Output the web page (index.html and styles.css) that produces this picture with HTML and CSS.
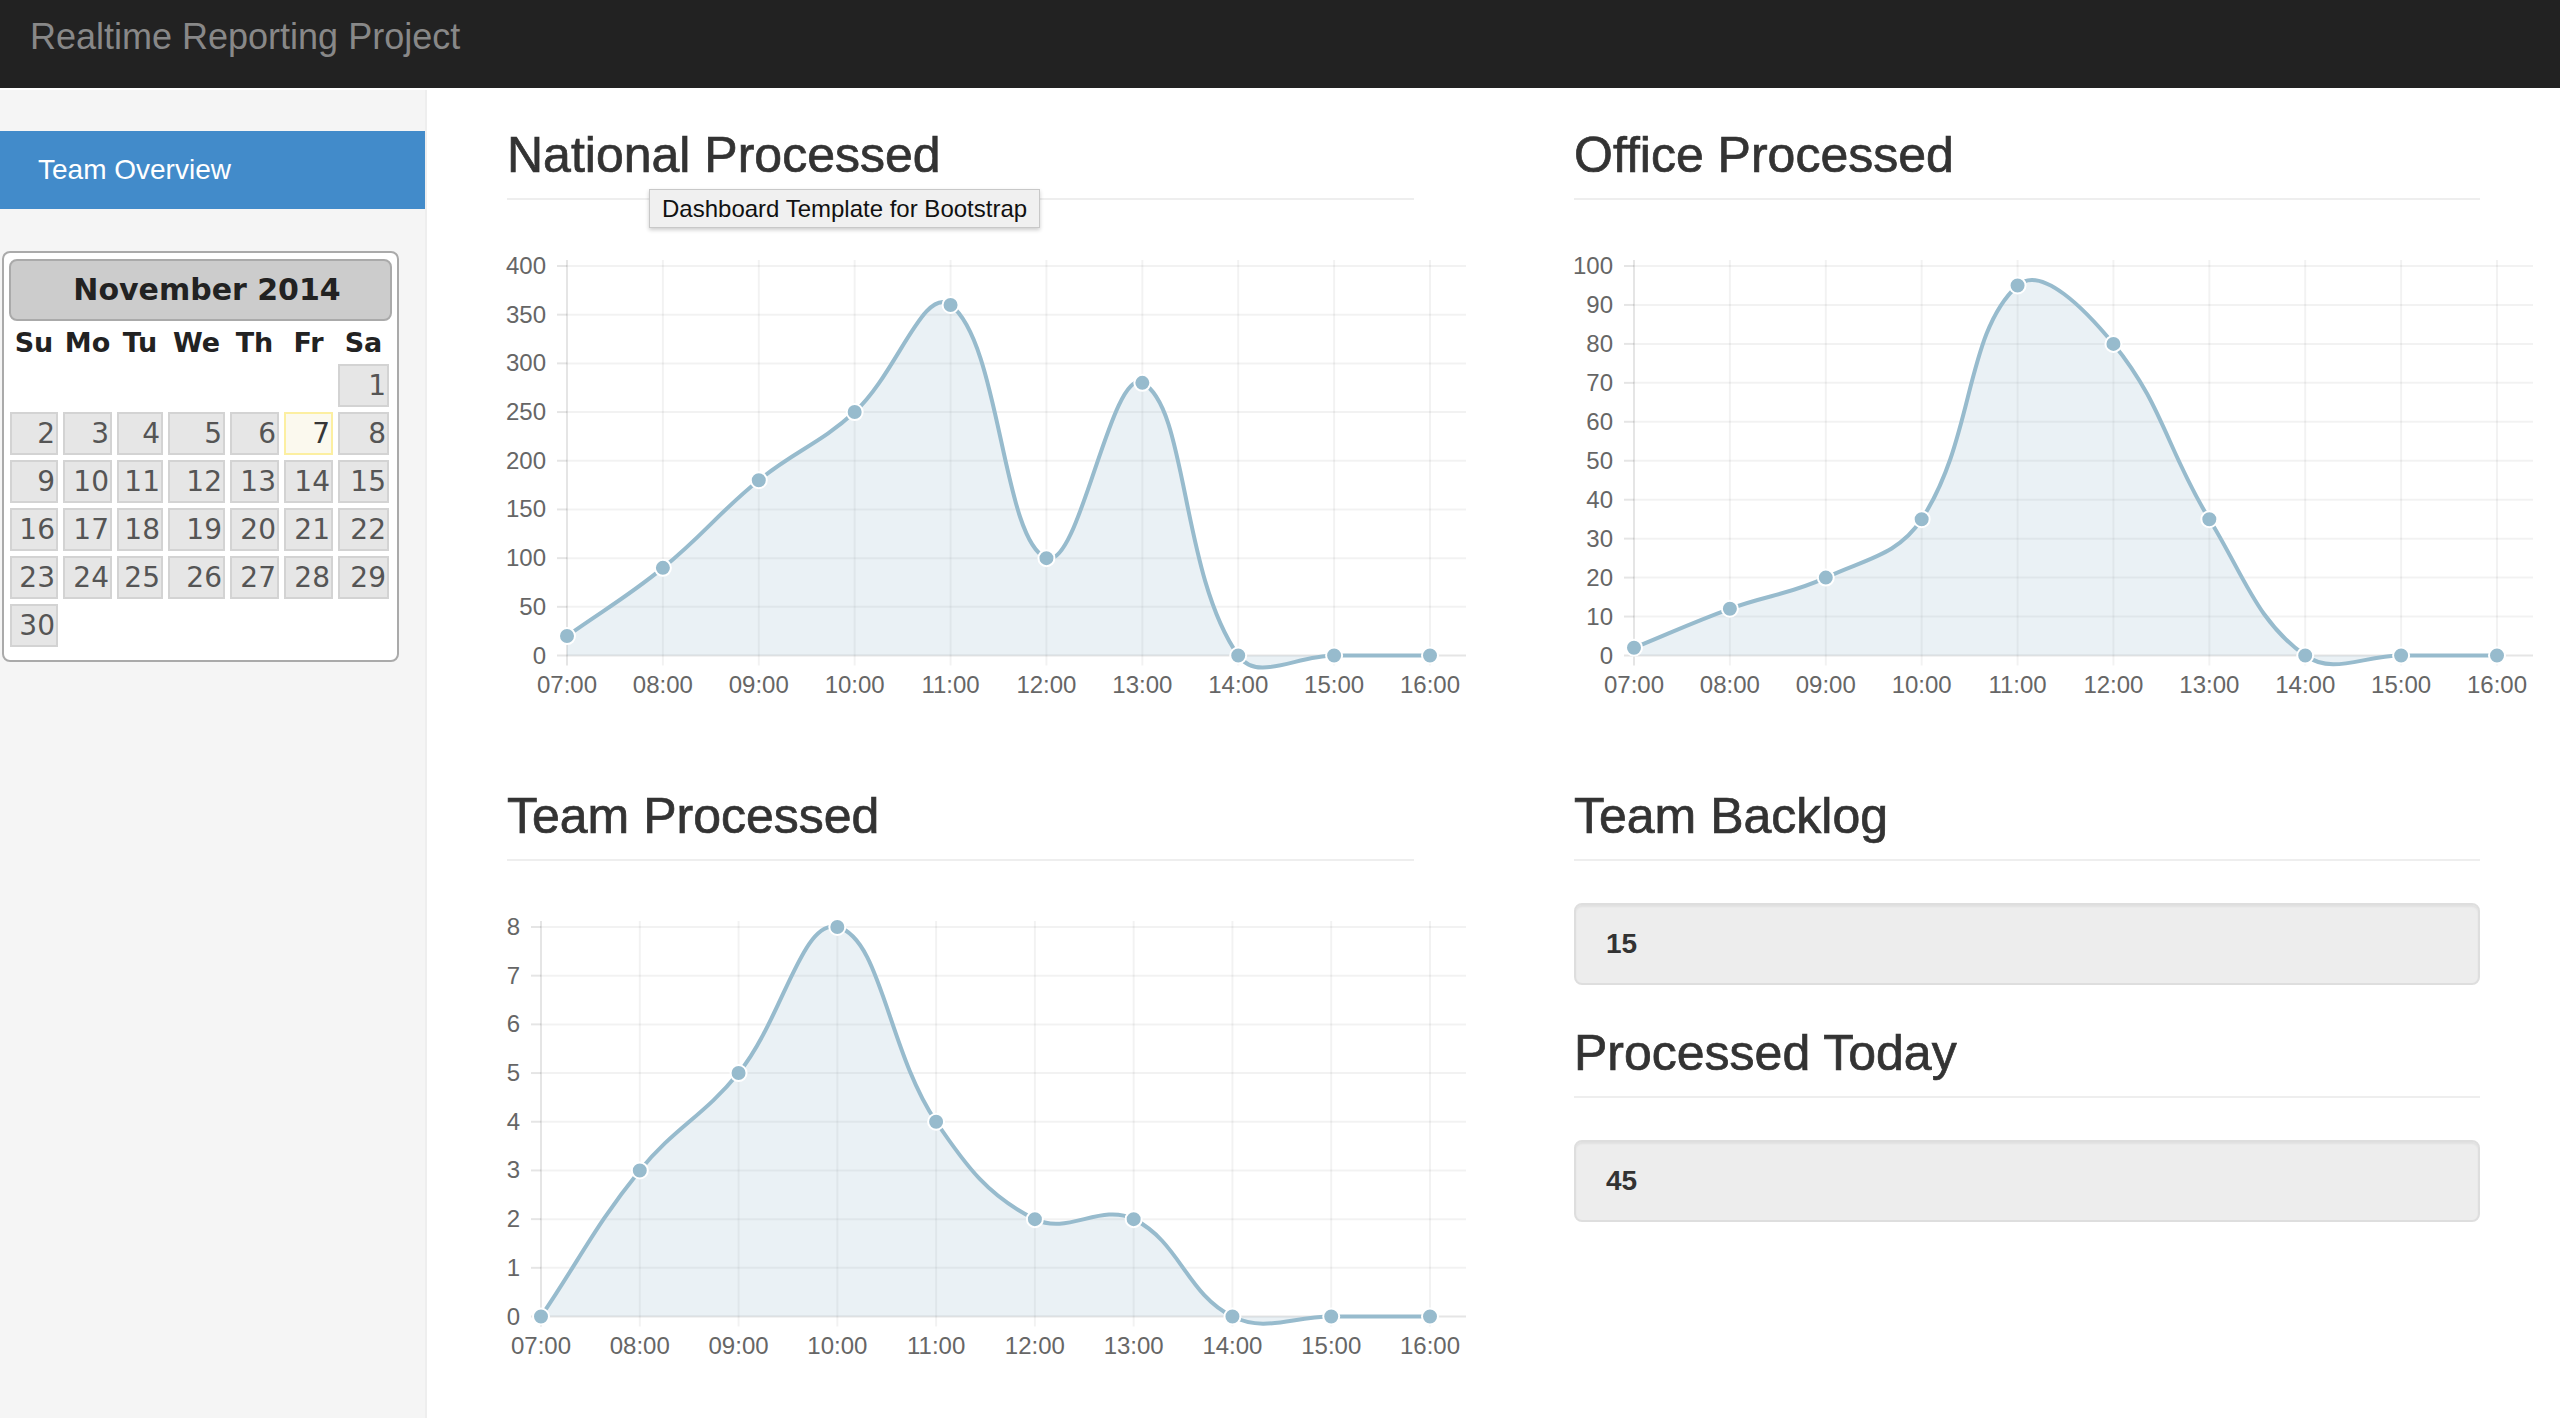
FILE: index.html
```html
<!DOCTYPE html>
<html lang="en">
<head>
<meta charset="utf-8">
<title>Dashboard Template for Bootstrap</title>
<link rel="stylesheet" href="styles.css">
</head>
<body>
<header class="navbar">
  <span class="brand">Realtime Reporting Project</span>
</header>
<div class="layout">
  <aside class="sidebar">
    <ul class="nav">
      <li class="nav-item active">Team Overview</li>
    </ul>
    <div class="datepicker">
      <div class="dp-header">November 2014</div>
      <div class="dp-grid">
        <span class="dp-dow">Su</span><span class="dp-dow">Mo</span><span class="dp-dow">Tu</span><span class="dp-dow">We</span><span class="dp-dow">Th</span><span class="dp-dow">Fr</span><span class="dp-dow">Sa</span>
        <span></span><span></span><span></span><span></span><span></span><span></span><span class="dp-day">1</span>
        <span class="dp-day">2</span><span class="dp-day">3</span><span class="dp-day">4</span><span class="dp-day">5</span><span class="dp-day">6</span><span class="dp-day today">7</span><span class="dp-day">8</span>
        <span class="dp-day">9</span><span class="dp-day">10</span><span class="dp-day">11</span><span class="dp-day">12</span><span class="dp-day">13</span><span class="dp-day">14</span><span class="dp-day">15</span>
        <span class="dp-day">16</span><span class="dp-day">17</span><span class="dp-day">18</span><span class="dp-day">19</span><span class="dp-day">20</span><span class="dp-day">21</span><span class="dp-day">22</span>
        <span class="dp-day">23</span><span class="dp-day">24</span><span class="dp-day">25</span><span class="dp-day">26</span><span class="dp-day">27</span><span class="dp-day">28</span><span class="dp-day">29</span>
        <span class="dp-day">30</span>
      </div>
    </div>
  </aside>
  <main class="main">
    <section class="panel">
      <h1 class="page-header">National Processed</h1>
      <svg class="chart" width="960" height="480" data-values="20,90,180,250,360,100,280,0,0,0" data-max="400" data-steps="8" data-axis="60" data-labelx="39"></svg>
    </section>
    <section class="panel">
      <h1 class="page-header">Office Processed</h1>
      <svg class="chart" width="960" height="480" data-values="2,12,20,35,95,80,35,0,0,0" data-max="100" data-steps="10" data-axis="60" data-labelx="39"></svg>
    </section>
    <section class="panel">
      <h1 class="page-header">Team Processed</h1>
      <svg class="chart" width="960" height="480" data-values="0,3,5,8,4,2,2,0,0,0" data-max="8" data-steps="8" data-axis="34" data-labelx="13"></svg>
    </section>
    <section class="panel">
      <h1 class="page-header">Team Backlog</h1>
      <div class="well">15</div>
      <h1 class="page-header">Processed Today</h1>
      <div class="well">45</div>
    </section>
  </main>
</div>
<div class="tip">Dashboard Template for Bootstrap</div>
<script src="charts.js"></script>
</body>
</html>
```

FILE: styles.css
```css
* { box-sizing: border-box; }

html, body {
  margin: 0;
  padding: 0;
}

body {
  font-family: "Liberation Sans", Arial, Helvetica, sans-serif;
  color: #333;
  background: #fff;
  position: relative;
  min-height: 1418px;
  overflow: hidden;
}

/* Top navbar */
.navbar {
  height: 88px;
  background: #222;
  padding: 19px 0 0 30px;
}

.brand {
  display: block;
  font-size: 36px;
  line-height: 36px;
  color: #888;
}

/* Layout */
.layout {
  display: flex;
  align-items: stretch;
}

.sidebar {
  flex: none;
  width: 427px;
  min-height: 1328px;
  margin-top: 2px;
  padding-top: 41px;
  background: #f5f5f5;
  border-right: 2px solid #eee;
}

.nav {
  list-style: none;
  margin: 0;
  padding: 0;
}

.nav-item {
  font-size: 28px;
  line-height: 38px;
  padding: 20px 38px;
  color: #428bca;
}

.nav-item.active {
  background: #428bca;
  color: #fff;
}

/* Datepicker */
.datepicker {
  width: 397px;
  margin: 42px 0 0 2px;
  padding: 6px 5px 13px;
  background: #fff;
  border: 2px solid #aaa;
  border-radius: 8px;
  font-family: "DejaVu Sans", Verdana, sans-serif;
}

.dp-header {
  height: 62px;
  padding-left: 13px;
  background: #ccc;
  border: 2px solid #aaa;
  border-radius: 8px;
  font-size: 30px;
  font-weight: bold;
  line-height: 58px;
  text-align: center;
  color: #222;
}

.dp-grid {
  display: grid;
  grid-template-columns: 48px 49px 46px 57px 49px 49px 51px;
  grid-template-rows: 38px;
  grid-auto-rows: 43px;
  column-gap: 5px;
  row-gap: 5px;
  margin-left: 1px;
}

.dp-dow {
  font-size: 27px;
  font-weight: bold;
  line-height: 44px;
  text-align: center;
  color: #222;
}

.dp-day {
  border: 2px solid #d3d3d3;
  background: #e6e6e6;
  color: #555;
  font-size: 28px;
  line-height: 39px;
  text-align: right;
  padding-right: 1px;
}

.dp-day.today {
  border-color: #fcefa1;
  background: #fbf9ee;
  color: #363636;
}

/* Main */
.main {
  flex: 1;
  display: grid;
  grid-template-columns: 907px 906px;
  column-gap: 160px;
  align-content: start;
  padding-left: 80px;
}

.panel {
  padding-bottom: 49px;
}

.page-header {
  margin: 40px 0 0;
  padding-bottom: 16px;
  border-bottom: 2px solid #eee;
  font-size: 50px;
  line-height: 54px;
  font-weight: normal;
  color: #333;
  -webkit-text-stroke: 0.7px #333;
}

.chart {
  display: block;
  width: 960px;
  height: 480px;
  margin-top: 20px;
  overflow: visible;
}

.chart .tick {
  font-family: "Liberation Sans", Arial, Helvetica, sans-serif;
  font-size: 24px;
  fill: #666;
}

.well {
  margin-top: 42px;
  height: 82px;
  display: flex;
  align-items: center;
  padding-left: 30px;
  background: #ededed;
  border: 2px solid #dedede;
  border-radius: 8px;
  box-shadow: inset 0 2px 2px rgba(0, 0, 0, 0.05);
  font-size: 28px;
  font-weight: bold;
  color: #333;
}

.well + .page-header {
  margin-top: 41px;
}

/* Native-looking title tooltip */
.tip {
  position: absolute;
  left: 649px;
  top: 189px;
  height: 39px;
  padding: 0 12px;
  background: #f0f0f0;
  border: 1px solid #c8c8c8;
  box-shadow: 0 2px 4px rgba(0, 0, 0, 0.2);
  font-size: 24px;
  line-height: 37px;
  color: #111;
  white-space: nowrap;
}
```

FILE: charts.js
```js
(function () {
  var NS = 'http://www.w3.org/2000/svg';
  var LABELS = ['07:00', '08:00', '09:00', '10:00', '11:00', '12:00', '13:00', '14:00', '15:00', '16:00'];
  var TOP = 46, BOTTOM = 435.5, X_END = 923, RIGHT = 959, TENSION = 0.4;
  var COLOR = '#97bbcd';

  function make(name, attrs, parent) {
    var e = document.createElementNS(NS, name);
    for (var k in attrs) e.setAttribute(k, attrs[k]);
    if (parent) parent.appendChild(e);
    return e;
  }

  function r(n) { return Math.round(n * 100) / 100; }

  function spline(a, b, c, t) {
    var d01 = Math.sqrt(Math.pow(b.x - a.x, 2) + Math.pow(b.y - a.y, 2));
    var d12 = Math.sqrt(Math.pow(c.x - b.x, 2) + Math.pow(c.y - b.y, 2));
    var sum = (d01 + d12) || 1;
    var fa = t * d01 / sum, fb = t * d12 / sum;
    return {
      inner: { x: b.x - fa * (c.x - a.x), y: b.y - fa * (c.y - a.y) },
      outer: { x: b.x + fb * (c.x - a.x), y: b.y + fb * (c.y - a.y) }
    };
  }

  Array.prototype.forEach.call(document.querySelectorAll('svg.chart'), function (svg) {
    var d = svg.dataset;
    var values = d.values.split(',').map(Number);
    var max = +d.max, steps = +d.steps, axis = +d.axis, lx = +d.labelx;
    var n = values.length, step = (X_END - axis) / (n - 1);
    var grid = make('g', {}, svg);
    var i, y, x, t;

    for (i = 0; i <= steps; i++) {
      y = r(BOTTOM - i * (BOTTOM - TOP) / steps);
      make('line', { x1: axis, y1: y, x2: RIGHT, y2: y, stroke: i === 0 ? 'rgba(0,0,0,0.1)' : 'rgba(0,0,0,0.05)', 'stroke-width': 2 }, grid);
      make('line', { x1: axis - 10, y1: y, x2: axis, y2: y, stroke: 'rgba(0,0,0,0.1)', 'stroke-width': 2 }, grid);
      t = make('text', { x: lx, y: r(y + 8), 'text-anchor': 'end', 'class': 'tick' }, grid);
      t.textContent = String(Math.round(i * max / steps));
    }

    for (i = 0; i < n; i++) {
      x = r(axis + i * step);
      make('line', { x1: x, y1: BOTTOM + 10, x2: x, y2: TOP - 6, stroke: i === 0 ? 'rgba(0,0,0,0.1)' : 'rgba(0,0,0,0.05)', 'stroke-width': 2 }, grid);
      t = make('text', { x: x, y: BOTTOM + 37, 'text-anchor': 'middle', 'class': 'tick' }, grid);
      t.textContent = LABELS[i];
    }

    var pts = values.map(function (v, k) {
      return { x: axis + k * step, y: BOTTOM - v / max * (BOTTOM - TOP) };
    });
    pts.forEach(function (p, k) {
      var cp = spline(pts[k - 1] || p, p, pts[k + 1] || p, TENSION);
      p.inner = cp.inner;
      p.outer = cp.outer;
    });

    var path = 'M' + r(pts[0].x) + ' ' + r(pts[0].y);
    for (i = 1; i < n; i++) {
      var a = pts[i - 1], b = pts[i];
      path += ' C' + r(a.outer.x) + ' ' + r(a.outer.y) + ' ' + r(b.inner.x) + ' ' + r(b.inner.y) + ' ' + r(b.x) + ' ' + r(b.y);
    }
    var fillPath = path + ' L' + r(pts[n - 1].x) + ' ' + BOTTOM + ' L' + r(pts[0].x) + ' ' + BOTTOM + ' Z';

    make('path', { d: fillPath, fill: 'rgba(151,187,205,0.2)', stroke: 'none' }, svg);
    make('path', { d: path, fill: 'none', stroke: COLOR, 'stroke-width': 4 }, svg);

    var dots = make('g', {}, svg);
    pts.forEach(function (p) {
      make('circle', { cx: r(p.x), cy: r(p.y), r: 8, fill: COLOR, stroke: '#fff', 'stroke-width': 2 }, dots);
    });
  });
})();
```
